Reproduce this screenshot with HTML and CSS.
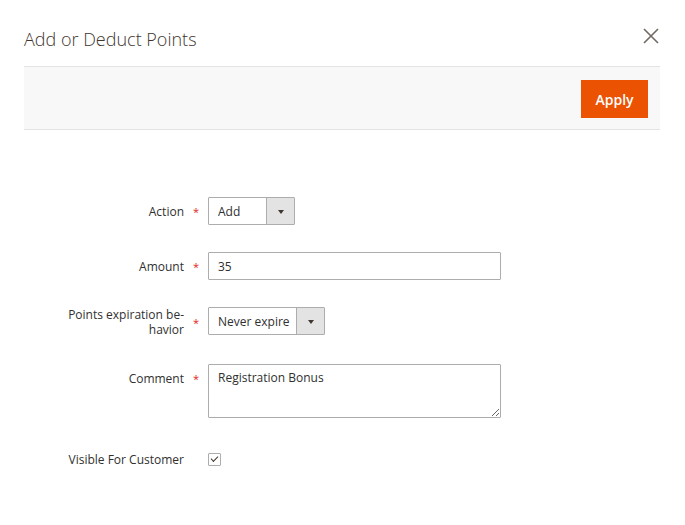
FILE: index.html
```html
<!DOCTYPE html>
<html lang="en">
<head>
    <meta charset="UTF-8">
    <title>Add or Deduct Points</title>
    <link rel="stylesheet" href="styles.css">
</head>
<body>

<div class="modal">
    <header class="modal-header">
        <h1 class="modal-title">Add or Deduct Points</h1>
        <button class="action-close" type="button" aria-label="Close">
            <svg width="16" height="16" viewBox="0 0 16 16">
                <path d="M1 1 L15 15 M15 1 L1 15" stroke="#736963" stroke-width="1.6" fill="none"/>
            </svg>
        </button>
    </header>

    <div class="page-actions">
        <button class="action-primary" type="button">Apply</button>
    </div>

    <form class="form">
        <div class="field">
            <label class="field-label" for="action">Action</label>
            <span class="required">*</span>
            <div class="control">
                <div class="admin-select select-action">
                    <select id="action" class="select">
                        <option>Add</option>
                        <option>Deduct</option>
                    </select>
                </div>
            </div>
        </div>

        <div class="field">
            <label class="field-label" for="amount">Amount</label>
            <span class="required">*</span>
            <div class="control">
                <input id="amount" class="input-text" type="text" value="35">
            </div>
        </div>

        <div class="field">
            <label class="field-label" for="expire">Points expiration be&shy;havior</label>
            <span class="required">*</span>
            <div class="control">
                <div class="admin-select select-expire">
                    <select id="expire" class="select">
                        <option>Never expire</option>
                    </select>
                </div>
            </div>
        </div>

        <div class="field">
            <label class="field-label" for="comment">Comment</label>
            <span class="required">*</span>
            <div class="control">
                <textarea id="comment" class="textarea">Registration Bonus</textarea>
            </div>
        </div>

        <div class="field">
            <label class="field-label" for="visible">Visible For Customer</label>
            <span class="required"></span>
            <div class="control">
                <input id="visible" class="checkbox" type="checkbox" checked>
            </div>
        </div>
    </form>
</div>

</body>
</html>
```

FILE: styles.css
```css
body {
    margin: 0;
    padding: 0;
    background: #fff;
    font-family: "Open Sans", "Liberation Sans", sans-serif;
    color: #303030;
}

.modal {
    padding: 0 25px 0 24px;
}

.modal-header {
    display: flex;
    justify-content: space-between;
    align-items: flex-start;
    height: 66px;
}

.modal-title {
    margin: 26px 0 0;
    font-size: 18px;
    font-weight: 300;
    line-height: 26px;
    color: #41362f;
}

.action-close {
    margin: 28px 1px 0 0;
    padding: 0;
    border: none;
    background: none;
    width: 16px;
    height: 16px;
    cursor: pointer;
}

.action-close svg {
    display: block;
}

.page-actions {
    display: flex;
    justify-content: flex-end;
    padding: 13px 12px 11px;
    background: #f8f8f8;
    border-top: 1px solid #e3e3e3;
    border-bottom: 1px solid #e3e3e3;
}

.action-primary {
    width: 67px;
    height: 38px;
    padding: 0;
    border: 1px solid #eb5202;
    background: #eb5202;
    color: #fff;
    font-family: inherit;
    font-size: 14px;
    font-weight: 600;
    cursor: pointer;
}

.form {
    padding: 67px 0 0 35px;
}

.field {
    display: flex;
    align-items: flex-start;
    margin-bottom: 27px;
}

.field-label {
    display: flex;
    align-items: center;
    justify-content: flex-end;
    width: 125px;
    min-height: 28px;
    font-size: 12px;
    font-weight: 500;
    line-height: 15px;
    text-align: right;
    color: #303030;
}

.required {
    display: flex;
    align-items: center;
    justify-content: center;
    width: 24px;
    height: 28px;
    color: #e22626;
    font-size: 11px;
    line-height: 15px;
}

.field:nth-child(3) .required {
    height: 30px;
}

.control {
    display: flex;
    align-items: center;
    min-height: 28px;
}

.input-text,
.textarea,
.select {
    box-sizing: border-box;
    border: 1px solid #adadad;
    border-radius: 1px;
    background: #fff;
    font-family: inherit;
    font-size: 12px;
    color: #303030;
    outline: none;
}

.input-text {
    width: 293px;
    height: 28px;
    padding: 0 9px;
}

.textarea {
    display: block;
    width: 293px;
    height: 54px;
    padding: 5px 9px;
    line-height: 16px;
    resize: vertical;
}

.admin-select {
    position: relative;
}

.select {
    display: block;
    height: 28px;
    padding: 0 29px 0 9px;
    appearance: none;
    -webkit-appearance: none;
}

.select-action .select {
    width: 87px;
}

.select-expire .select {
    width: 117px;
}

.admin-select::before {
    content: "";
    position: absolute;
    top: 1px;
    right: 1px;
    bottom: 1px;
    width: 27px;
    background: #e3e3e3;
    border-left: 1px solid #adadad;
    pointer-events: none;
}

.admin-select::after {
    content: "";
    position: absolute;
    top: 13px;
    right: 11px;
    border-left: 3px solid transparent;
    border-right: 3px solid transparent;
    border-top: 4px solid #41362f;
    pointer-events: none;
}

.checkbox {
    position: relative;
    box-sizing: border-box;
    width: 13px;
    height: 13px;
    margin: 0;
    border: 1px solid #adadad;
    border-radius: 1px;
    background: #fff;
    appearance: none;
    -webkit-appearance: none;
}

.checkbox:checked::after {
    content: "";
    position: absolute;
    top: 2px;
    left: 2px;
    width: 6px;
    height: 3px;
    border-left: 1.5px solid #41362f;
    border-bottom: 1.5px solid #41362f;
    transform: rotate(-45deg);
}
```
